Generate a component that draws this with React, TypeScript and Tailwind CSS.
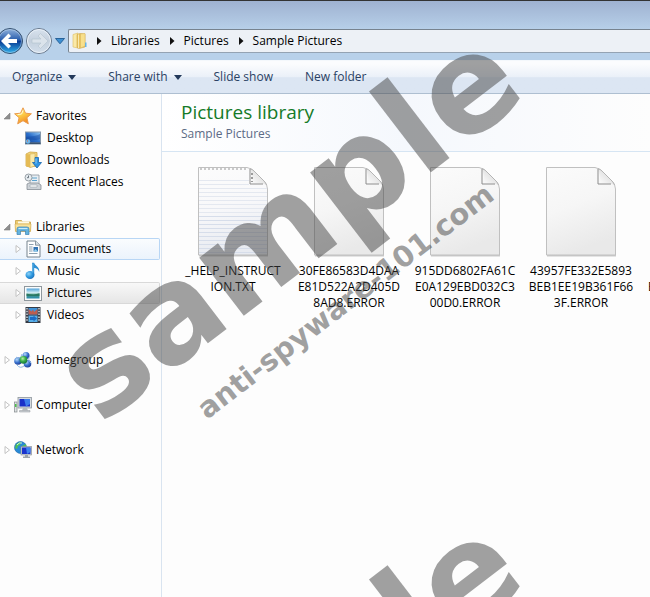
import type { ReactNode } from 'react'

interface TreeItem {
  label: string
  icon: ReactNode
  state?: 'hover' | 'selected'
}

interface TreeGroup extends TreeItem {
  open: boolean
  items: TreeItem[]
}

function StarIcon() {
  return (
    <svg viewBox="0 0 18 18" className="w-[18px] h-[18px] shrink-0">
      <defs>
        <linearGradient id="star" x1="0" y1="0" x2="0.5" y2="1">
          <stop offset="0" stopColor="#fff6b0" />
          <stop offset="0.5" stopColor="#fdd04a" />
          <stop offset="1" stopColor="#f28a22" />
        </linearGradient>
      </defs>
      <path
        d="M9 .8l2.500 5.400 5.900.6-4.500 3.900 1.400 6.100L9 13.700l-5.300 3.100 1.400-6.100L.6 6.800l5.900-.6z"
        fill="url(#star)"
        stroke="#ea9a4c"
        strokeWidth="1"
        strokeLinejoin="round"
      />
      <path d="M9 3.500L7.600 7l-4 .6" fill="none" stroke="#fffad8" strokeWidth="1" />
    </svg>
  )
}

function DesktopIcon() {
  return (
    <svg viewBox="0 0 18 18" className="w-[18px] h-[18px] shrink-0">
      <defs>
        <linearGradient id="desk" x1="0" y1="1" x2="1" y2="0">
          <stop offset="0" stopColor="#15489c" />
          <stop offset="0.5" stopColor="#2b6fcb" />
          <stop offset="1" stopColor="#8cc3f2" />
        </linearGradient>
      </defs>
      <rect x="1" y="2.500" width="16" height="13" fill="#8497ab" />
      <rect x="2" y="3.500" width="14" height="10" fill="url(#desk)" />
      <path d="M2 8c4-1 9 0 14-3v5c-5 2-9 0-14 1z" fill="#14479d" opacity="0.45" />
      <rect x="1.500" y="13.500" width="15" height="1.500" fill="#3a536f" />
      <circle cx="4" cy="12.500" r="2.200" fill="#6cb4e8" />
      <rect x="3" y="11.500" width="1" height="1" fill="#e9643b" />
    </svg>
  )
}

function DownloadsIcon() {
  return (
    <svg viewBox="0 0 18 18" className="w-[18px] h-[18px] shrink-0">
      <path d="M2 3l4-2 7 .5V15l-7 1-4-1z" fill="#f3d57c" stroke="#cda445" strokeWidth="0.8" />
      <path d="M6 3l5-.5V15l-5 1.500z" fill="#fae9a8" stroke="#d2ac50" strokeWidth="0.6" />
      <path d="M2 3l4 .5v13L2 15z" fill="#e5bb55" />
      <path
        d="M11 6.500h3.500v5H17.500L13 17 8.500 11.500H11z"
        fill="#2f95e4"
        stroke="#1766af"
        strokeWidth="0.8"
        strokeLinejoin="round"
      />
      <path d="M12 7.500v5" stroke="#8fd0fa" strokeWidth="1" />
    </svg>
  )
}

function RecentIcon() {
  return (
    <svg viewBox="0 0 18 18" className="w-[18px] h-[18px] shrink-0">
      <path d="M6 2h9v10H6z" fill="#e8eef3" stroke="#8b959e" strokeWidth="0.8" />
      <path d="M8 5h5M8 7.500h5" stroke="#5aa3d0" strokeWidth="1.200" />
      <path d="M3 11l2-1h9l3 2v4.500H3z" fill="#cdd2d7" stroke="#858d94" strokeWidth="0.8" />
      <path d="M6 12h7v2H6z" fill="#fff" stroke="#8b959e" strokeWidth="0.5" />
      <circle cx="4.500" cy="4.500" r="3.500" fill="#e6ecf0" stroke="#8e979e" strokeWidth="0.9" />
      <path d="M4.500 2.500v2.200H3" fill="none" stroke="#5b6770" strokeWidth="0.9" />
    </svg>
  )
}

function LibrariesIcon() {
  return (
    <svg viewBox="0 0 18 18" className="w-[18px] h-[18px] shrink-0">
      <path d="M1.500 2.500h6l1 1.500h8v9h-15z" fill="#edcd74" stroke="#c79f45" strokeWidth="0.8" />
      <path d="M4 3.500h11v2H4z" fill="#fffbe8" />
      <path d="M1 6h16l-.5 7.500h-15z" fill="#f9e29a" stroke="#d0aa50" strokeWidth="0.6" />
      <path
        d="M3 16.500V11q0-2 2-2h8q2 0 2 2v5.500h-3.500V13h-5v3.500z"
        fill="#63b3df"
        stroke="#3b83b5"
        strokeWidth="0.7"
      />
      <path d="M4.500 10.500h9" stroke="#c8ebfb" strokeWidth="1.200" />
    </svg>
  )
}

function DocumentsIcon() {
  return (
    <svg viewBox="0 0 18 18" className="w-[18px] h-[18px] shrink-0">
      <path d="M3 1h8.500L16 5.200V17H3z" fill="#fdfeff" stroke="#76848f" strokeWidth="1" />
      <path d="M11.500 1v4.200H16" fill="#d7e0e6" stroke="#76848f" strokeWidth="0.8" />
      <path d="M5 4.500h4.500M5 7h3.500M5 9h3.500M5 11h3.500M5 13.500h8.500" stroke="#8c9fae" strokeWidth="1" />
      <rect x="9.500" y="7" width="4.500" height="4.500" fill="#3172b2" />
      <path d="M9.500 11.500l2-2.500 2.500 2.500z" fill="#8fd0f0" />
    </svg>
  )
}

function MusicIcon() {
  return (
    <svg viewBox="0 0 18 18" className="w-[18px] h-[18px] shrink-0">
      <defs>
        <radialGradient id="note" cx="0.35" cy="0.35" r="0.8">
          <stop offset="0" stopColor="#8ed2f6" />
          <stop offset="0.5" stopColor="#2e98df" />
          <stop offset="1" stopColor="#1766b0" />
        </radialGradient>
      </defs>
      <path d="M8 .8h2.200c.4 3.200 5.800 3.700 5 9.200-.8-2.700-2.700-3.700-5-4v7H8z" fill="#2e8fd3" />
      <ellipse cx="6" cy="13" rx="4.500" ry="4" fill="url(#note)" />
      <path d="M8.800 1.500v9" stroke="#8dd0f4" strokeWidth="0.7" />
    </svg>
  )
}

function PicturesIcon() {
  return (
    <svg viewBox="0 0 18 18" className="w-[18px] h-[18px] shrink-0">
      <defs>
        <linearGradient id="sky" x1="0" y1="0" x2="0" y2="1">
          <stop offset="0" stopColor="#52a3da" />
          <stop offset="0.45" stopColor="#d9f1f5" />
          <stop offset="0.6" stopColor="#46927d" />
          <stop offset="1" stopColor="#2d8fb4" />
        </linearGradient>
      </defs>
      <rect x="0.500" y="2.500" width="17" height="14" fill="#fbfcfc" stroke="#8e979d" strokeWidth="1" />
      <rect x="2.500" y="4.500" width="13" height="10" fill="url(#sky)" />
      <path d="M2.500 9.500l4 1 3 .5 6-2v3h-13z" fill="#23705a" opacity="0.75" />
    </svg>
  )
}

function VideosIcon() {
  return (
    <svg viewBox="0 0 18 18" className="w-[18px] h-[18px] shrink-0">
      <rect x="1.500" y="1" width="15" height="16" fill="#353b45" />
      <path
        d="M3 2v14M15 2v14"
        stroke="#cfd6dc"
        strokeWidth="1.500"
        strokeDasharray="1.500 1.300"
      />
      <rect x="4.500" y="2" width="9" height="6.500" fill="#3f93d8" />
      <rect x="4.500" y="9.500" width="9" height="6.500" fill="#57aee8" />
      <path d="M4.500 3l3 2.500 1.500-2 1 2.500 3.500-3v5.500h-9z" fill="#bd5d4e" />
      <path d="M6 11h3.500v-1.500l3.500 3-3.500 3V14H6z" fill="#1c6bc4" />
    </svg>
  )
}

function HomegroupIcon() {
  return (
    <svg viewBox="0 0 18 18" className="w-[18px] h-[18px] shrink-0">
      <defs>
        <radialGradient id="orb" cx="0.35" cy="0.3" r="0.8">
          <stop offset="0" stopColor="#b9dcfa" />
          <stop offset="0.5" stopColor="#3b74cf" />
          <stop offset="1" stopColor="#16318b" />
        </radialGradient>
        <radialGradient id="leaf" cx="0.4" cy="0.35" r="0.7">
          <stop offset="0" stopColor="#b7f0a0" />
          <stop offset="0.5" stopColor="#37ae48" />
          <stop offset="1" stopColor="#14703a" />
        </radialGradient>
      </defs>
      <circle cx="12" cy="4.500" r="3.500" fill="url(#orb)" />
      <circle cx="4" cy="10" r="3.800" fill="url(#orb)" />
      <circle cx="13.500" cy="12.800" r="3.800" fill="url(#orb)" />
      <path d="M2 6q4 4 6-3M10 15q-4 3-7-1M16 5q-3 3 1 7" fill="none" stroke="#8fb8e2" strokeWidth="1" />
      <circle cx="9.500" cy="8.800" r="3.900" fill="url(#leaf)" />
    </svg>
  )
}

function ComputerIcon() {
  return (
    <svg viewBox="0 0 18 18" className="w-[18px] h-[18px] shrink-0">
      <rect x="0.500" y="6" width="2.500" height="10" fill="#dfe3e4" stroke="#83898c" strokeWidth="0.7" />
      <rect x="1" y="8" width="1.500" height="3" fill="#4bc04b" />
      <rect x="4" y="1.500" width="13.500" height="10.500" fill="#d6dbdf" stroke="#8e969d" strokeWidth="0.8" />
      <rect x="5.500" y="3" width="10.500" height="7.500" fill="#1a2fc8" />
      <path d="M10 3h6v5l-4 2.500z" fill="#3c7ceb" />
      <path d="M9 12h4l1 2.500H8z" fill="#b5babd" />
      <path d="M5.500 14.500h10.500v1.500H5.500z" fill="#ccd1d4" stroke="#90979c" strokeWidth="0.5" />
    </svg>
  )
}

function NetworkIcon() {
  return (
    <svg viewBox="0 0 18 18" className="w-[18px] h-[18px] shrink-0">
      <circle cx="6.500" cy="6.500" r="6" fill="#288ad6" stroke="#1d66a8" strokeWidth="0.6" />
      <path d="M2 3.500q3-3 5-2.500l-1 3-2 1-1 3-2-1zM8 5l4-2 .5 4-3 1z" fill="#4fc057" />
      <path d="M3 4q2-3 5-2" fill="none" stroke="#c9f2d6" strokeWidth="1" />
      <rect x="7" y="5.500" width="10.500" height="8.500" fill="#c9d0d6" stroke="#7f8890" strokeWidth="0.6" />
      <rect x="8" y="6.500" width="8.500" height="6.500" fill="#1a33cd" />
      <path d="M12 6.500h4.500V11L13 13z" fill="#3f83ee" />
      <path d="M11 14h3v1.500h2V17H9v-1.500h2z" fill="#9ca4ab" />
    </svg>
  )
}

function FolderIcon() {
  return (
    <svg viewBox="0 0 16 18" className="w-4 h-[18px] shrink-0">
      <path d="M1 2.500l5-1.500v15l-5-1z" fill="#fae9a6" stroke="#dcbc62" strokeWidth="0.6" />
      <path d="M5 2.500l3-1 5 .5v13l-6 1.500-2-1z" fill="#e9c25c" stroke="#cfa84f" strokeWidth="0.6" />
      <path d="M8.500 2l4.500-.5v12.500L8.500 16z" fill="#f8e08c" stroke="#d9b75f" strokeWidth="0.5" />
      <path d="M6.500 2.500V16" stroke="#f9e9ae" strokeWidth="1" />
      <path d="M13 10.500h1.500v4.500H13z" fill="#67b3e3" />
    </svg>
  )
}

function PageIcon({ lined }: { lined?: boolean }) {
  return (
    <svg viewBox="0 0 72 92" className="w-[72px] h-[92px] shrink-0">
      <defs>
        <linearGradient id="page" x1="0" y1="0" x2="0.3" y2="1">
          <stop offset="0" stopColor="#fbfbfb" />
          <stop offset="0.5" stopColor="#f6f6f6" />
          <stop offset="1" stopColor="#e9e9e9" />
        </linearGradient>
        <linearGradient id="notepad" x1="0" y1="0" x2="0.2" y2="1">
          <stop offset="0" stopColor="#fcfcfc" />
          <stop offset="0.5" stopColor="#f8f8fa" />
          <stop offset="1" stopColor="#e8ebf1" />
        </linearGradient>
        <linearGradient id="fold" x1="0" y1="1" x2="0.7" y2="0.3">
          <stop offset="0" stopColor="#ffffff" />
          <stop offset="1" stopColor="#dedede" />
        </linearGradient>
      </defs>
      <path d="M2 89.500h69" stroke="#000" strokeOpacity="0.2" strokeWidth="2" />
      <path
        d="M1.500 1.500H50q4 .5 8 4.500l9 9q3.500 4 3.500 8V89h-69z"
        fill={lined ? 'url(#notepad)' : 'url(#page)'}
        stroke="#c0c0c0"
        strokeWidth="1"
      />
      {lined && (
        <>
          <path d="M2 14.500h50M2 18.500h50M2 22.500h68M2 26.500h68M2 30.500h68M2 34.500h68M2 38.500h68M2 42.500h68M2 46.500h68" stroke="#e4e8f0" strokeWidth="1" />
          <path d="M2 50.500h68M2 54.500h68M2 58.500h68M2 62.500h68M2 66.500h68M2 70.500h68M2 74.500h68M2 78.500h68M2 82.500h68M2 86.500h68" stroke="#d6ddea" strokeWidth="1" />
          <path d="M3 3h48" stroke="#cacaca" strokeWidth="2" strokeDasharray="2 2" />
        </>
      )}
      <path d="M53 3q3 9 2 14.500 6-1 14 1-2-4-6-7l-6-6q-2-2-4-2.500z" fill="url(#fold)" />
      <path d="M53 2.500q3 1 5 3.500l9 9q2 2 2.500 4" fill="none" stroke="#b4b4b4" strokeWidth="1" />
      <path d="M53 3v15h13" fill="none" stroke="#8d8d8d" strokeWidth="1" />
      {lined && <path d="M55 7v9" stroke="#9b9b9b" strokeWidth="2" strokeDasharray="2 2" />}
    </svg>
  )
}

function BackIcon() {
  return (
    <svg viewBox="0 0 28 28" className="w-7 h-7">
      <defs>
        <linearGradient id="back" x1="0" y1="0" x2="0" y2="1">
          <stop offset="0" stopColor="#93b4dc" />
          <stop offset="0.45" stopColor="#2b5fae" />
          <stop offset="0.52" stopColor="#0a3c94" />
          <stop offset="1" stopColor="#31b4ee" />
        </linearGradient>
      </defs>
      <circle cx="14" cy="14" r="12.500" fill="url(#back)" stroke="#34506f" strokeWidth="1" />
      <circle cx="14" cy="14" r="11.500" fill="none" stroke="#c5dcf2" strokeOpacity="0.5" strokeWidth="1" />
      <path d="M5 14l7.500-7.500 2.500 2.500-3 3H21v4h-9l3 3-2.500 2.500z" fill="#fff" />
    </svg>
  )
}

function ForwardIcon() {
  return (
    <svg viewBox="0 0 28 28" className="w-7 h-7">
      <defs>
        <linearGradient id="fwd" x1="0" y1="0" x2="0" y2="1">
          <stop offset="0" stopColor="#d8e2ee" />
          <stop offset="0.5" stopColor="#c4d0dd" />
          <stop offset="1" stopColor="#d3dfec" />
        </linearGradient>
      </defs>
      <circle cx="14" cy="14" r="12.500" fill="url(#fwd)" stroke="#66768a" strokeWidth="1" />
      <circle cx="14" cy="14" r="11.500" fill="none" stroke="#eaf1f8" strokeWidth="1" />
      <path d="M23 14l-7.500-7.500L13 9l3 3H7v4h9l-3 3 2.500 2.500z" fill="#dbe3eb" stroke="#b4c2cf" strokeWidth="0.6" />
    </svg>
  )
}

function Arrow({ open }: { open: boolean }) {
  return (
    <svg viewBox="0 0 8 8" className="w-2 h-2 shrink-0">
      {open ? (
        <path d="M7 1v6H1z" fill="#8f8f8f" stroke="#808080" strokeWidth="0.6" />
      ) : (
        <path d="M2 .5v7L6.500 4z" fill="#fff" stroke="#c2c2c2" strokeWidth="1" />
      )}
    </svg>
  )
}

const groups: TreeGroup[] = [
  {
    label: 'Favorites',
    icon: <StarIcon />,
    open: true,
    items: [
      { label: 'Desktop', icon: <DesktopIcon /> },
      { label: 'Downloads', icon: <DownloadsIcon /> },
      { label: 'Recent Places', icon: <RecentIcon /> },
    ],
  },
  {
    label: 'Libraries',
    icon: <LibrariesIcon />,
    open: true,
    items: [
      { label: 'Documents', icon: <DocumentsIcon />, state: 'hover' },
      { label: 'Music', icon: <MusicIcon /> },
      { label: 'Pictures', icon: <PicturesIcon />, state: 'selected' },
      { label: 'Videos', icon: <VideosIcon /> },
    ],
  },
  { label: 'Homegroup', icon: <HomegroupIcon />, open: false, items: [] },
  { label: 'Computer', icon: <ComputerIcon />, open: false, items: [] },
  { label: 'Network', icon: <NetworkIcon />, open: false, items: [] },
]

const itemStyles = {
  none: 'border-transparent',
  hover: 'border-[#b8d6f5] bg-linear-to-b from-[#fafcfe] to-[#ebf3fc]',
  selected: 'border-[#d9d9d9] bg-linear-to-b from-[#f8f8f8] to-[#e6e6e6]',
}

const files = [
  { lines: ['_HELP_INSTRUCT', 'ION.TXT'], lined: true },
  { lines: ['30FE86583D4DAA', 'E81D522A2D405D', '8AD8.ERROR'] },
  { lines: ['915DD6802FA61C', 'E0A129EBD032C3', '00D0.ERROR'] },
  { lines: ['43957FE332E5893', 'BEB1EE19B361F66', '3F.ERROR'] },
]

const crumbs = ['Libraries', 'Pictures', 'Sample Pictures']

const commands = [
  { label: 'Organize', menu: true },
  { label: 'Share with', menu: true },
  { label: 'Slide show' },
  { label: 'New folder' },
]

function AddressBar() {
  return (
    <header className="border-t border-[#333] bg-linear-to-b from-[#9fb2d1] to-[#b8d1ea] to-50% pt-7 pb-[7px]">
      <div className="flex items-center h-6">
        <div className="flex items-center gap-px -ml-1 shrink-0">
          <button type="button" aria-label="Back"><BackIcon /></button>
          <button type="button" aria-label="Forward"><ForwardIcon /></button>
        </div>
        <button type="button" aria-label="Recent pages" className="ml-0.5 mr-[3px] shrink-0">
          <svg viewBox="0 0 10 8" className="w-2.5 h-2">
            <path d="M.5 1.500h9L5 6.800z" fill="#3c8fd2" stroke="#1f5a92" strokeWidth="0.9" strokeLinejoin="round" />
          </svg>
        </button>
        <nav className="flex flex-1 items-center h-6 min-w-0 pl-[3px] border border-r-0 border-[#77838f] border-b-[#94a3b3] rounded-l-xs bg-[#edf1f6]">
          <FolderIcon />
          {crumbs.map((crumb) => (
            <div key={crumb} className="flex items-center">
              <svg viewBox="0 0 6 8" className="w-1.5 h-2 mx-2">
                <path d="M1 0v8l4.500-4z" fill="#111" />
              </svg>
              <button type="button" className="px-px text-black">{crumb}</button>
            </div>
          ))}
        </nav>
      </div>
    </header>
  )
}

function Toolbar() {
  return (
    <div className="flex items-center h-[34px] pl-3 gap-8 border-y border-t-[#f4f8fc] border-b-[#aebfd1] bg-linear-to-b from-[#fbfcfe] from-10% via-[#eaf0f8] via-50% to-[#dce6f3] to-52% text-[#2a4163]">
      {commands.map(({ label, menu }) => (
        <button key={label} type="button" className="flex items-center gap-1.5 whitespace-nowrap">
          {label}
          {menu && (
            <svg viewBox="0 0 8 5" className="w-2 h-[5px]">
              <path d="M0 0h8L4 5z" fill="#22395a" />
            </svg>
          )}
        </button>
      ))}
    </div>
  )
}

function Sidebar() {
  return (
    <aside className="flex flex-col gap-[23px] w-[162px] shrink-0 pt-[11px] border-r border-[#d9e4f0]">
      {groups.map((group) => (
        <ul key={group.label}>
          <li>
            <button type="button" className="flex items-center w-full h-[22px] pl-[3px]">
              <Arrow open={group.open} />
              <span className="ml-[3px] mr-1">{group.icon}</span>
              {group.label}
            </button>
          </li>
          {group.items.map((item) => (
            <li key={item.label}>
              <button
                type="button"
                className={`flex items-center w-[160px] h-[22px] pl-[14px] border border-l-0 rounded-r-xs ${itemStyles[item.state ?? 'none']}`}
              >
                <span className="w-2">{group.label === 'Libraries' && <Arrow open={false} />}</span>
                <span className="ml-0.5 mr-[5px]">{item.icon}</span>
                {item.label}
              </button>
            </li>
          ))}
        </ul>
      ))}
    </aside>
  )
}

function Library() {
  return (
    <main className="flex-1 min-w-0 overflow-hidden">
      <div className="h-[58px] pl-[19px] pt-1.5 border-b border-[#d6e5f3] bg-linear-to-r from-white via-[#f5f8fd] to-[#fdfdfd]">
        <h1 className="text-[19px] leading-6 text-[#157a28]">Pictures library</h1>
        <p className="leading-5 text-[#5c6b85]">Sample Pictures</p>
      </div>
      <ul className="flex pl-[13px] pt-3.5">
        {files.map(({ lines, lined }) => (
          <li key={lines[0]} className="flex flex-col items-center w-[116px] shrink-0">
            <PageIcon lined={lined} />
            <p className="mt-[5px] text-center leading-4">
              {lines.map((line) => (
                <span key={line} className="block">{line}</span>
              ))}
            </p>
          </li>
        ))}
        <li className="w-[116px] shrink-0 pl-[9px] pt-[113px] leading-4">E</li>
      </ul>
    </main>
  )
}

function Watermark() {
  return (
    <svg
      width="650"
      height="597"
      className="absolute top-0 left-0 pointer-events-none font-['DejaVu_Sans'] font-bold"
      fill="#444"
      fillOpacity="0.5"
    >
      <text x="100" y="426" fontSize="134" transform="rotate(-37.500 100 426)">sample</text>
      <text x="207" y="420" fontSize="29" transform="rotate(-37.500 207 420)">anti-spyware-101.com</text>
      <text x="100" y="914" fontSize="134" transform="rotate(-37.500 100 914)">sample</text>
    </svg>
  )
}

export default function App() {
  return (
    <div className="relative flex flex-col min-h-screen overflow-hidden bg-[#fdfdfd] text-[12px] text-black font-['Open_Sans',sans-serif]">
      <AddressBar />
      <Toolbar />
      <div className="flex flex-1">
        <Sidebar />
        <Library />
      </div>
      <Watermark />
    </div>
  )
}
